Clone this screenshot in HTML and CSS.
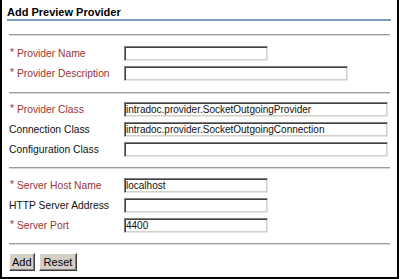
FILE: index.html
```html
<!DOCTYPE html>
<html>
<head>
    <title>Add Preview Provider</title>
    <link rel="stylesheet" href="styles.css">
</head>
<body>
    <div class="panel">
        <div class="panel-title">Add Preview Provider</div>
        <div class="rule"></div>

        <div class="section first">
            <div class="row">
                <label class="label required"><span class="star">*</span> Provider Name</label>
                <input type="text" class="field short">
            </div>
            <div class="row">
                <label class="label required"><span class="star">*</span> Provider Description</label>
                <input type="text" class="field medium">
            </div>
        </div>
        <div class="rule"></div>

        <div class="section second">
            <div class="row">
                <label class="label required"><span class="star">*</span> Provider Class</label>
                <input type="text" class="field long" value="intradoc.provider.SocketOutgoingProvider">
            </div>
            <div class="row">
                <label class="label">Connection Class</label>
                <input type="text" class="field long" value="intradoc.provider.SocketOutgoingConnection">
            </div>
            <div class="row">
                <label class="label">Configuration Class</label>
                <input type="text" class="field long">
            </div>
        </div>
        <div class="rule"></div>

        <div class="section third">
            <div class="row">
                <label class="label required"><span class="star">*</span> Server Host Name</label>
                <input type="text" class="field short" value="localhost">
            </div>
            <div class="row">
                <label class="label">HTTP Server Address</label>
                <input type="text" class="field short">
            </div>
            <div class="row">
                <label class="label required"><span class="star">*</span> Server Port</label>
                <input type="text" class="field short" value="4400">
            </div>
        </div>
        <div class="rule"></div>

        <div class="buttons">
            <button class="btn">Add</button>
            <button class="btn reset">Reset</button>
        </div>
    </div>
</body>
</html>
```

FILE: styles.css
```css
body {
    margin: 0;
    background: #fff;
    font-family: 'Liberation Sans', Arial, sans-serif;
}

.panel {
    width: 399px;
    height: 279px;
    box-sizing: border-box;
    border: 2px solid #000;
    border-top: none;
}

.panel-title {
    margin-left: 5px;
    width: 384px;
    padding-top: 5px;
    height: 14px;
    line-height: 14px;
    font-size: 11px;
    font-weight: bold;
    color: #000;
    border-bottom: 2px solid #7f9cc3;
}

.rule {
    margin-left: 7px;
    width: 381px;
    border-top: 1px solid #9c9c9c;
    border-bottom: 1px solid #d8d8d8;
}

.panel-title + .rule {
    margin-top: 13px;
}

.section {
    display: flex;
    flex-direction: column;
    gap: 5px;
    padding-left: 7px;
}

.section.first {
    padding-top: 10px;
    padding-bottom: 11px;
}

.section.second {
    padding-top: 8px;
    padding-bottom: 10px;
}

.section.third {
    padding-top: 9px;
    padding-bottom: 10px;
}

.row {
    display: flex;
    align-items: center;
    height: 15px;
}

.label {
    width: 115px;
    font-size: 10.3px;
    color: #111;
    white-space: nowrap;
}

.label.required {
    color: #9b3434;
}

.star {
    position: relative;
    top: -1px;
    margin-left: 1px;
}

.field {
    height: 15px;
    box-sizing: border-box;
    margin: 0;
    padding: 0 1px;
    font-family: 'Liberation Sans', Arial, sans-serif;
    font-size: 10px;
    color: #111;
    background: #fff;
    border-top: 1px solid #808080;
    border-left: 1px solid #808080;
    border-right: 1px solid #e8e6e0;
    border-bottom: 1px solid #e8e6e0;
    box-shadow: inset 1px 1px 0 #404040, inset -1px -1px 0 #d4d0c8;
    outline: none;
}

.field.short {
    width: 144px;
}

.field.medium {
    width: 224px;
}

.field.long {
    width: 264px;
}

.buttons {
    display: flex;
    gap: 4px;
    padding-top: 8px;
    padding-left: 7px;
}

.btn {
    height: 18px;
    margin: 0;
    padding: 0 2px;
    font-family: 'Liberation Sans', Arial, sans-serif;
    font-size: 11px;
    color: #000;
    background: #d4d0c8;
    border-top: 1px solid #fff;
    border-left: 1px solid #fff;
    border-right: 1px solid #404040;
    border-bottom: 1px solid #404040;
    box-shadow: inset -1px -1px 0 #808080;
}

.btn.reset {
    padding: 0 4px;
}
```
